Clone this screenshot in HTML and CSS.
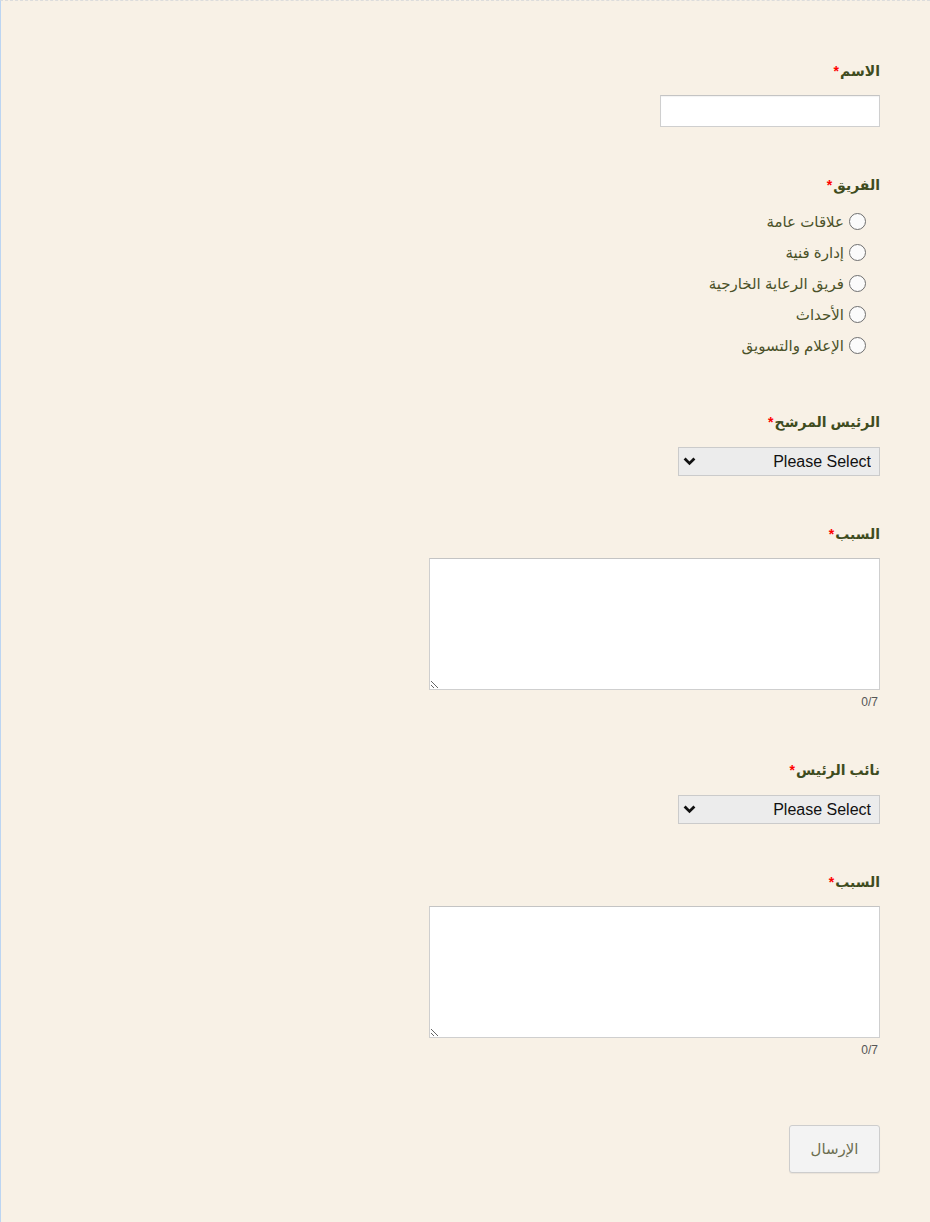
FILE: index.html
```html
<!DOCTYPE html>
<html lang="ar" dir="rtl">
<head>
<meta charset="utf-8">
<title>Form</title>
<link rel="stylesheet" href="styles.css">
</head>
<body>
<div class="page">
  <form class="form">
    <div class="field">
      <label class="label" for="name">الاسم<span class="req">*</span></label>
      <input class="text-input" id="name" type="text">
    </div>

    <div class="field field-radios">
      <div class="label label-radios">الفريق<span class="req">*</span></div>
      <ul class="radios">
        <li><label class="radio"><input type="radio" name="team"><span>علاقات عامة</span></label></li>
        <li><label class="radio"><input type="radio" name="team"><span>إدارة فنية</span></label></li>
        <li><label class="radio"><input type="radio" name="team"><span>فريق الرعاية الخارجية</span></label></li>
        <li><label class="radio"><input type="radio" name="team"><span>الأحداث</span></label></li>
        <li><label class="radio"><input type="radio" name="team"><span>الإعلام والتسويق</span></label></li>
      </ul>
    </div>

    <div class="field">
      <label class="label" for="pres">الرئيس المرشح<span class="req">*</span></label>
      <div class="select-wrap">
        <select class="select" id="pres"><option>Please Select</option></select>
        <svg class="chev" width="13" height="9" viewBox="0 0 13 9"><path d="M1.6 1.6 L6.5 6.4 L11.4 1.6" fill="none" stroke="#111" stroke-width="2.8"/></svg>
      </div>
    </div>

    <div class="field field-counter">
      <label class="label" for="r1">السبب<span class="req">*</span></label>
      <textarea class="textarea" id="r1"></textarea>
      <div class="counter">0/7</div>
    </div>

    <div class="field">
      <label class="label" for="vp">نائب الرئيس<span class="req">*</span></label>
      <div class="select-wrap">
        <select class="select" id="vp"><option>Please Select</option></select>
        <svg class="chev" width="13" height="9" viewBox="0 0 13 9"><path d="M1.6 1.6 L6.5 6.4 L11.4 1.6" fill="none" stroke="#111" stroke-width="2.8"/></svg>
      </div>
    </div>

    <div class="field field-last">
      <label class="label" for="r2">السبب<span class="req">*</span></label>
      <textarea class="textarea" id="r2"></textarea>
      <div class="counter">0/7</div>
    </div>

    <div class="actions">
      <button class="submit" type="button">الإرسال</button>
    </div>
  </form>
</div>
</body>
</html>
```

FILE: styles.css
```css
html, body {
  margin: 0;
  padding: 0;
}
body {
  background: #f8f1e6;
  font-family: "Liberation Sans", "DejaVu Sans", Arial, sans-serif;
}
.page {
  min-height: 1222px;
  box-sizing: border-box;
  border-left: 1px solid #bcd5f2;
  border-top: 1px dashed #dcdcdc;
  padding: 60px 50px 40px 50px;
}
.form {
  display: flex;
  flex-direction: column;
  align-items: flex-start;
}
.field {
  display: flex;
  flex-direction: column;
  align-items: flex-start;
  margin-bottom: 48px;
}
.field-radios { margin-bottom: 51px; }
.field-counter { margin-bottom: 51px; }
.field-last { margin-bottom: 68px; }
.label {
  display: block;
  font-size: 14px;
  line-height: 20px;
  font-weight: bold;
  color: #3f4c1e;
  margin-bottom: 14px;
}
.label-radios { margin-bottom: 11px; }
.req {
  color: #f00;
  margin-right: 1px;
}
.text-input {
  width: 220px;
  height: 32px;
  box-sizing: border-box;
  border: 1px solid #cfcfcf;
  border-top-color: #c4c4c4;
  box-shadow: inset 0 1px 1px rgba(0,0,0,0.05);
  background: #fff;
  margin: 0;
  padding: 4px 6px;
  font-size: 14px;
}
.radios {
  list-style: none;
  margin: 0;
  padding: 0 14px 0 0;
}
.radios li {
  height: 31px;
  display: flex;
  align-items: center;
}
.radio {
  display: flex;
  align-items: center;
  gap: 5px;
  font-size: 15px;
  color: #4b5229;
}
.radio input {
  appearance: none;
  -webkit-appearance: none;
  width: 17px;
  height: 17px;
  margin: 0;
  border: 1px solid #6f6f6f;
  border-radius: 50%;
  background: #fbfbfb;
  box-sizing: border-box;
}
.select-wrap {
  position: relative;
  margin-top: 1px;
}
.select {
  appearance: none;
  -webkit-appearance: none;
  width: 202px;
  height: 29px;
  box-sizing: border-box;
  border: 1px solid #cbcbcb;
  background: #ececec;
  font-family: "Liberation Sans", Arial, sans-serif;
  font-size: 16px;
  color: #111;
  padding: 0 8px 0 30px;
  margin: 0;
  direction: rtl;
  border-radius: 0;
}
.chev {
  position: absolute;
  left: 5px;
  top: 10px;
  pointer-events: none;
}
.textarea {
  width: 451px;
  height: 132px;
  box-sizing: border-box;
  border: 1px solid #cfcfcf;
  border-top-color: #c4c4c4;
  background: #fff;
  margin: 0;
  padding: 4px;
  display: block;
  resize: both;
  font-family: "Liberation Sans", "DejaVu Sans", sans-serif;
}
.counter {
  font-size: 12px;
  line-height: 14px;
  color: #555;
  margin-top: 5px;
  padding-right: 2px;
}
.actions {
  display: flex;
}
.submit {
  width: 91px;
  height: 48px;
  box-sizing: border-box;
  border: 1px solid #cdcdcd;
  border-radius: 3px;
  background: #f3f3f3;
  box-shadow: 0 1px 1px rgba(0,0,0,0.06);
  font-family: "Liberation Sans", "DejaVu Sans", sans-serif;
  font-size: 15px;
  color: #6c6e4f;
  padding: 0;
  margin: 0;
}
```
